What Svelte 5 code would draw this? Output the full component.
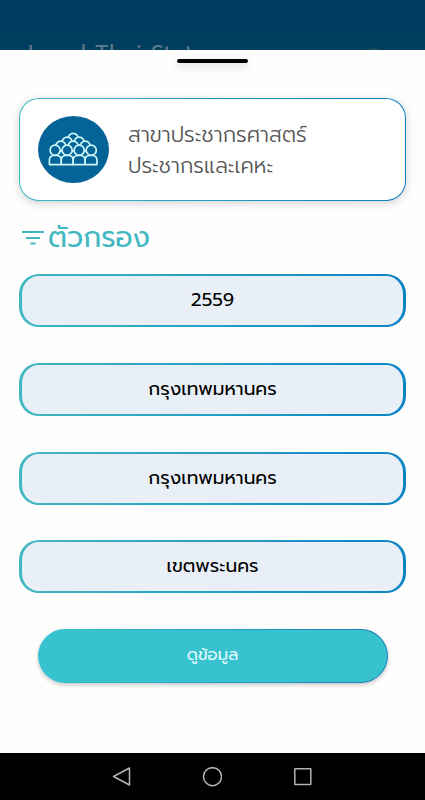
<script>
  const fields = [
    { name: 'year', value: '2559' },
    { name: 'region', value: 'กรุงเทพมหานคร' },
    { name: 'province', value: 'กรุงเทพมหานคร' },
    { name: 'district', value: 'เขตพระนคร' }
  ]

  // crowd icon, back rows first so the front heads cover them
  const heads = [
    [129, 85],
    [111, 96], [147, 96],
    [92, 108], [129, 108], [165, 108],
    [75, 120], [111, 120], [147, 120], [183, 120]
  ]
  const bodies = [58, 93.5, 129, 164.5]
</script>

<div class="screen">
  <header>
    <span>Local Thai Stat</span>
    <i class="avatar"></i>
  </header>

  <main>
    <div class="handle"></div>

    <section class="card">
      <svg class="crowd" viewBox="24 18 212 200" width="71" height="67" preserveAspectRatio="none">
        <ellipse cx="130" cy="118" rx="106" ry="100" fill="#056497" />
        <g fill="#056497" stroke="#c9f7fa" stroke-width="5" stroke-linejoin="round">
          {#each heads as [cx, cy]}
            <circle {cx} {cy} r="15" />
          {/each}
          {#each bodies as x}
            <path d="M{x} 163v-12q0-13 11-15h13.500q11 2 11 15v12z" />
          {/each}
        </g>
      </svg>
      <p><span class="branch">สาขาประชากรศาสตร์</span><br /><span class="topic">ประชากรและเคหะ</span></p>
    </section>

    <h2>
      <svg viewBox="0 0 22 14" width="22" height="14">
        <path d="M0 1h22M4 7h14M8.5 12.5h5" stroke="#42b8c2" stroke-width="2.2" />
      </svg>
      <span>ตัวกรอง</span>
    </h2>

    <div class="fields">
      {#each fields as field}
        <button class="field {field.name}"><span>{field.value}</span></button>
      {/each}
    </div>

    <button class="submit"><span>ดูข้อมูล</span></button>
  </main>

  <nav>
    <svg viewBox="0 0 20 20" width="20" height="20"><path d="M17.5 1v17L1.500 9.500z" /></svg>
    <svg viewBox="0 0 20 20" width="20" height="20"><circle cx="10.500" cy="9.700" r="9" /></svg>
    <svg viewBox="0 0 20 20" width="20" height="20"><rect x="1.800" y="1.800" width="16" height="15.600" rx="0.5" /></svg>
  </nav>
</div>

<style>
  :global(body) { margin: 0; }
  .screen {
    width: 425px;
    height: 800px;
    display: flex;
    flex-direction: column;
    overflow: hidden;
    background: #fefefe;
    font-family: Prompt, Kanit, "Noto Sans Thai", "Noto Sans", sans-serif;
  }
  header {
    box-sizing: border-box;
    height: 50px;
    display: flex;
    justify-content: space-between;
    padding: 39px 38px 0 28px;
    overflow: hidden;
    background: linear-gradient(#003b61, #003e5e);
    color: #5a788c;
    font-size: 23px;
    line-height: 32px;
    letter-spacing: 0.3px;
    white-space: nowrap;
  }
  .avatar {
    width: 26px;
    height: 26px;
    margin-top: 9px;
    border-radius: 50%;
    background: #1d4c58;
  }
  main {
    flex: 1;
    display: flex;
    flex-direction: column;
    padding: 0 19px;
  }
  .handle {
    width: 71px;
    height: 4px;
    margin: 9px auto 35px;
    border-radius: 2px;
    background: #000;
    box-shadow: 0 3px 8px rgb(0 0 0 / 0.2);
  }
  .card {
    box-sizing: border-box;
    height: 103px;
    display: flex;
    align-items: center;
    gap: 19px;
    padding: 0 18px;
    border: 1px solid transparent;
    border-radius: 20px;
    background: linear-gradient(#fff, #fff) padding-box, linear-gradient(90deg, #42b8c2, #0b7fc0) border-box;
    box-shadow: 0 2px 10px rgb(0 0 0 / 0.18);
  }
  .card p {
    margin: 2px 0 0;
    color: #555;
    font-size: 21.1px;
    font-weight: 300;
    line-height: 30.5px;
    white-space: nowrap;
  }
  h2 {
    height: 36px;
    display: flex;
    align-items: center;
    gap: 4px;
    margin: 19px 0 18.4px 3px;
    color: #42b8c2;
    font-size: 28.1px;
    font-weight: 400;
    line-height: 36px;
    white-space: nowrap;
  }
  .fields {
    display: grid;
    gap: 35.6px;
  }
  button {
    font-family: inherit;
    padding: 0;
  }
  .field {
    height: 53px;
    padding-bottom: 1px;
    border: solid transparent;
    border-width: 2px 3px;
    border-radius: 20px;
    background: linear-gradient(#e8eff7, #e8eff7) padding-box, linear-gradient(90deg, #42b8c2, #0b84c5) border-box;
    color: #000;
    font-size: 18.6px;
  }
  .submit {
    height: 54px;
    margin: 35.6px 18.5px 0;
    padding-bottom: 2px;
    border: 1px solid transparent;
    border-radius: 27px;
    background: linear-gradient(#38c2cf, #38c2cf) padding-box, linear-gradient(90deg, #38c2cf, #187fb5) border-box;
    box-shadow: 0 2px 4px rgb(0 0 0 / 0.22);
    color: #e3fcff;
    font-size: 16.6px;
  }
  nav {
    height: 47px;
    display: flex;
    align-items: center;
    justify-content: center;
    gap: 70.5px;
    padding-right: 1px;
    background: #000;
  }
  nav svg {
    fill: none;
    stroke: #b5b5b5;
    stroke-width: 1.5;
    stroke-linejoin: round;
  }
</style>
